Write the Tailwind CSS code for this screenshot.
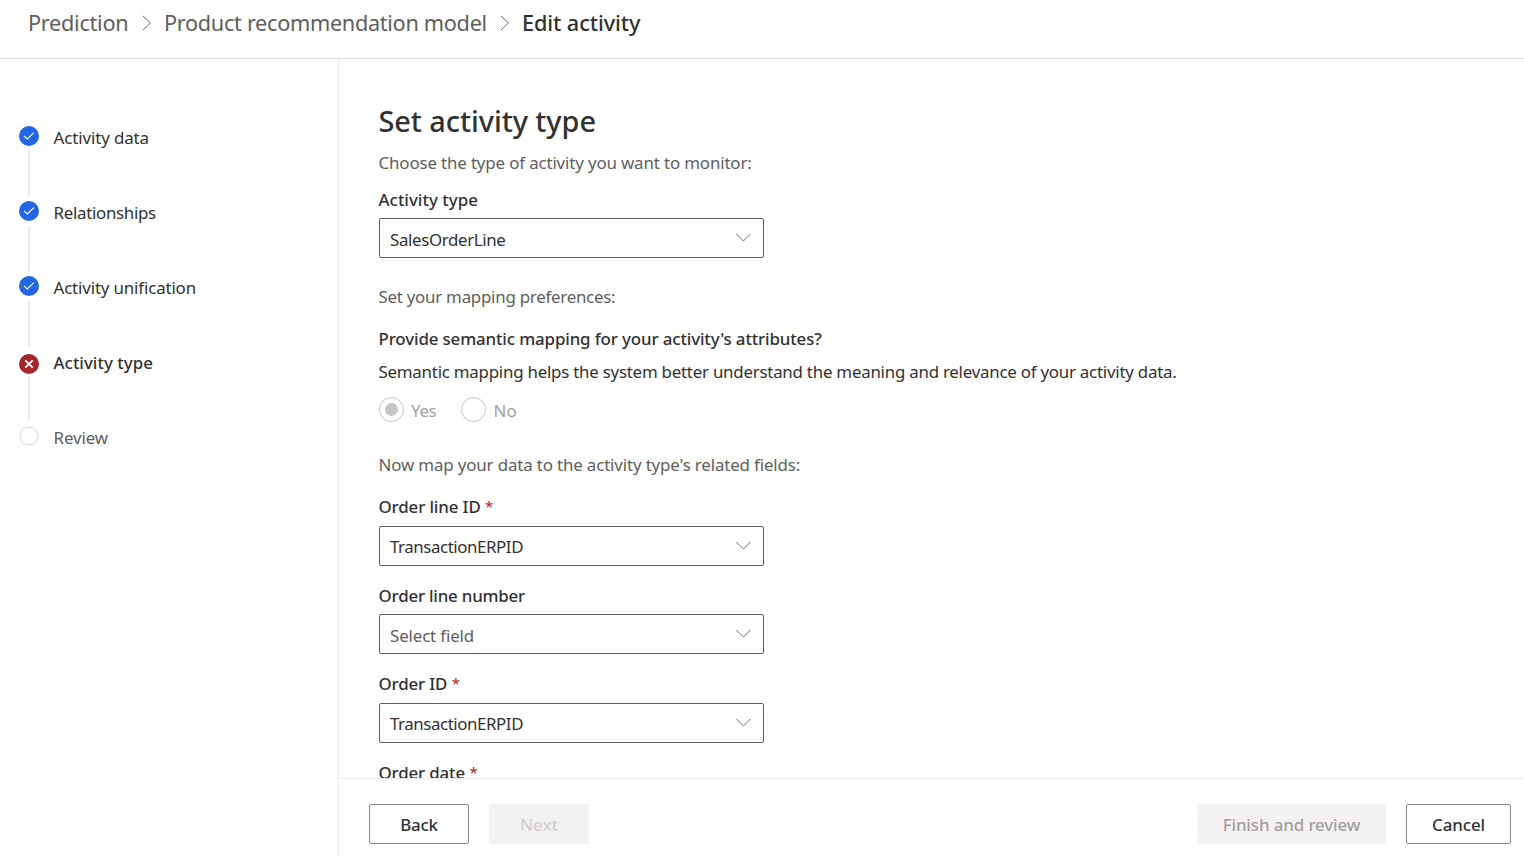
<!DOCTYPE html>
<html lang="en">
<head>
<meta charset="utf-8">
<title>Edit activity</title>
<script src="https://cdn.jsdelivr.net/npm/@tailwindcss/browser@4"></script>
</head>
<body class="flex h-screen flex-col overflow-hidden bg-white font-['Noto_Sans','Open_Sans',sans-serif] text-[16.89px] leading-6 whitespace-nowrap text-[#323130]">
  <header class="flex h-[59px] shrink-0 items-start border-b border-[#dcdcdc] pt-[7px] pl-[28px] text-[21.7px] leading-8 text-[#605e5c]">
    <a class="w-[101px] tracking-[-0.28px]">Prediction</a>
    <svg class="mt-2 ml-[13px] h-4 w-[10px] shrink-0" viewBox="0 0 10 16" fill="none" stroke="#605e5c" stroke-width=".9"><path d="M.8 .8 8.4 8 .8 15.2"/></svg>
    <a class="ml-[12px] w-[324px] tracking-[-0.31px]">Product recommendation model</a>
    <svg class="mt-2 ml-[12px] h-4 w-[10px] shrink-0" viewBox="0 0 10 16" fill="none" stroke="#605e5c" stroke-width=".9"><path d="M.8 .8 8.4 8 .8 15.2"/></svg>
    <span class="ml-[12px] font-medium tracking-[-0.1px] text-[#323130]">Edit activity</span>
  </header>

  <div class="flex min-h-0 flex-1">
    <nav class="w-[339px] shrink-0 border-r border-[#eaeaea] pt-[67px] pl-[18px]">
      <div class="flex h-[75px]">
        <div class="flex w-[22px] flex-col items-center">
          <svg class="size-5" viewBox="0 0 20 20" fill="none"><circle cx="10" cy="10" r="10" fill="#2266e3"/><path d="m5 9.8 3.3 3.2 6.5-6.4" stroke="#fff" stroke-width="1.1"/></svg>
          <div class="mt-[5px] h-[45px] w-0.5 bg-[#eaeaea]"></div>
        </div>
        <span class="ml-[13.5px] tracking-[-0.1px]">Activity data</span>
      </div>
      <div class="flex h-[75px]">
        <div class="flex w-[22px] flex-col items-center">
          <svg class="size-5" viewBox="0 0 20 20" fill="none"><circle cx="10" cy="10" r="10" fill="#2266e3"/><path d="m5 9.8 3.3 3.2 6.5-6.4" stroke="#fff" stroke-width="1.1"/></svg>
          <div class="mt-[5px] h-[45px] w-0.5 bg-[#eaeaea]"></div>
        </div>
        <span class="ml-[13.5px] tracking-[-0.3px]">Relationships</span>
      </div>
      <div class="flex h-[75px]">
        <div class="flex w-[22px] flex-col items-center">
          <svg class="size-5" viewBox="0 0 20 20" fill="none"><circle cx="10" cy="10" r="10" fill="#2266e3"/><path d="m5 9.8 3.3 3.2 6.5-6.4" stroke="#fff" stroke-width="1.1"/></svg>
          <div class="mt-[5px] h-[45px] w-0.5 bg-[#eaeaea]"></div>
        </div>
        <span class="ml-[13.5px] tracking-[-0.145px]">Activity unification</span>
      </div>
      <div class="flex h-[75px]">
        <div class="flex w-[22px] flex-col items-center">
          <svg class="mt-[3px] mr-[1px] size-5" viewBox="0 0 20 20" fill="none"><circle cx="10" cy="10" r="10" fill="#a4262c"/><path d="m6.3 6.3 7.4 7.4m0-7.4-7.4 7.4" stroke="#fff" stroke-width="1.8"/></svg>
          <div class="mt-[2px] h-[45px] w-0.5 bg-[#eaeaea]"></div>
        </div>
        <span class="ml-[13.5px] font-medium tracking-[0.02px]">Activity type</span>
      </div>
      <div class="flex h-[75px]">
        <div class="flex w-[22px] flex-col items-center">
          <div class="size-5 rounded-full border-2 border-[#eaeaea]"></div>
        </div>
        <span class="ml-[13.5px] tracking-[-0.1px] text-[#605e5c]">Review</span>
      </div>
    </nav>

    <div class="flex min-w-0 flex-1 flex-col">
      <main class="min-h-0 flex-1 overflow-hidden pt-[42px] pl-[39.5px]">
        <h1 class="h-[50px] text-[28.9px] leading-[40px] font-medium tracking-[-0.05px]">Set activity type</h1>
        <p class="tracking-[-0.14px] text-[#605e5c]">Choose the type of activity you want to monitor:</p>
        <div class="mt-[13px] font-medium tracking-[0.02px]">Activity type</div>
        <div class="mt-[6px] ml-[0.5px] flex h-10 w-[385px] items-center justify-between rounded-xs border border-[#605e5c] pr-3 pl-[10px]">
          <span class="pt-[3px] tracking-[-0.36px]">SalesOrderLine</span>
          <svg class="h-[10px] w-4" viewBox="0 0 16 10" fill="none" stroke="#605e5c" stroke-width=".9"><path d="m1.4 1 7 7 7-7"/></svg>
        </div>
        <p class="mt-[27px] tracking-[-0.25px] text-[#605e5c]">Set your mapping preferences:</p>
        <div class="mt-[18px] font-medium tracking-[-0.128px]">Provide semantic mapping for your activity's attributes?</div>
        <p class="mt-[9px] tracking-[-0.235px]">Semantic mapping helps the system better understand the meaning and relevance of your activity data.</p>
        <div class="mt-[13px] ml-[0.5px] flex h-[25px] text-[#a19f9d]">
          <div class="flex size-[25px] items-center justify-center rounded-full border border-[#c8c6c4]"><div class="size-[13px] rounded-full bg-[#c8c6c4]"></div></div>
          <span class="ml-[7px] w-[50px] pt-[2px] tracking-[-0.3px]">Yes</span>
          <div class="size-[25px] rounded-full border border-[#c8c6c4]"></div>
          <span class="ml-[7.5px] pt-[2px] tracking-[0.1px]">No</span>
        </div>
        <p class="mt-[31px] tracking-[-0.14px] text-[#605e5c]">Now map your data to the activity type's related fields:</p>
        <div class="mt-[18px] flex gap-[4.5px] font-medium tracking-[-0.13px]">Order line ID <span class="-mt-px text-[15px] font-normal text-[#a4262c]">*</span></div>
        <div class="mt-[7px] ml-[0.5px] flex h-10 w-[385px] items-center justify-between rounded-xs border border-[#605e5c] pr-3 pl-[10px]">
          <span class="pt-[1px] tracking-[-0.43px]">TransactionERPID</span>
          <svg class="h-[10px] w-4" viewBox="0 0 16 10" fill="none" stroke="#605e5c" stroke-width=".9"><path d="m1.4 1 7 7 7-7"/></svg>
        </div>
        <div class="mt-[18px] font-medium tracking-[-0.2px]">Order line number</div>
        <div class="mt-[6px] ml-[0.5px] flex h-10 w-[385px] items-center justify-between rounded-xs border border-[#605e5c] pr-3 pl-[10px]">
          <span class="pt-[3px] tracking-[-0.13px] text-[#605e5c]">Select field</span>
          <svg class="h-[10px] w-4" viewBox="0 0 16 10" fill="none" stroke="#605e5c" stroke-width=".9"><path d="m1.4 1 7 7 7-7"/></svg>
        </div>
        <div class="mt-[18px] flex gap-[4.5px] font-medium tracking-[-0.16px]">Order ID <span class="-mt-px text-[15px] font-normal text-[#a4262c]">*</span></div>
        <div class="mt-[7px] ml-[0.5px] flex h-10 w-[385px] items-center justify-between rounded-xs border border-[#605e5c] pr-3 pl-[10px]">
          <span class="pt-[1px] tracking-[-0.43px]">TransactionERPID</span>
          <svg class="h-[10px] w-4" viewBox="0 0 16 10" fill="none" stroke="#605e5c" stroke-width=".9"><path d="m1.4 1 7 7 7-7"/></svg>
        </div>
        <div class="mt-[18px] flex gap-[4.5px] font-medium tracking-[-0.15px]">Order date <span class="-mt-px text-[15px] font-normal text-[#a4262c]">*</span></div>
      </main>
      <footer class="flex h-[78px] shrink-0 items-start border-t border-[#eaeaea] pt-[25px] pr-[13px] pl-[30px] font-medium">
        <button class="h-10 w-[100px] rounded-xs border border-[#8a8886] pt-px tracking-[-0.2px]">Back</button>
        <button class="ml-5 h-10 w-[100px] rounded-xs bg-[#f3f2f1] pt-px text-[#d2d0ce]">Next</button>
        <button class="ml-auto h-10 w-[189px] rounded-xs bg-[#f3f2f1] pt-px tracking-[-0.1px] text-[#a19f9d]">Finish and review</button>
        <button class="ml-5 h-10 w-[105px] rounded-xs border border-[#8a8886] pt-px tracking-[-0.1px]">Cancel</button>
      </footer>
    </div>
  </div>
</body>
</html>
